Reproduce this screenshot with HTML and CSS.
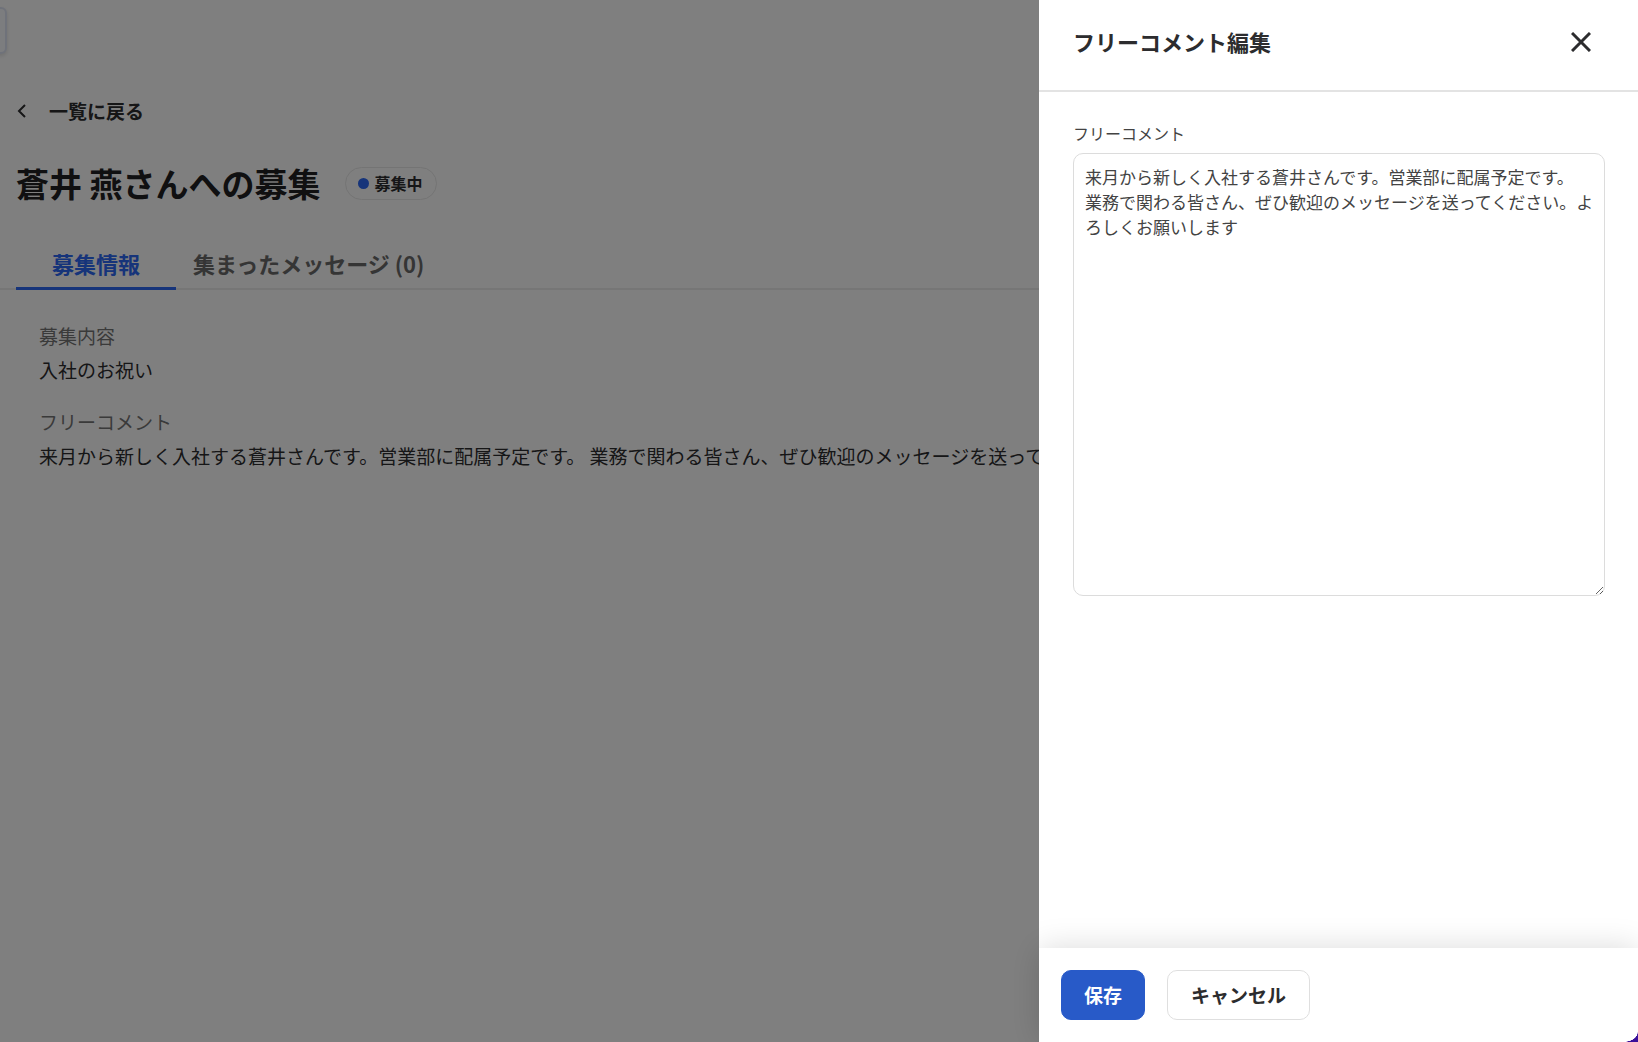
FILE: index.html
```html
<!DOCTYPE html>
<html lang="ja">
<head>
<meta charset="utf-8">
<meta name="viewport" content="width=device-width, initial-scale=1">
<title>蒼井 燕さんへの募集</title>
<link rel="stylesheet" href="styles.css">
</head>
<body>
<div class="side-card"></div>
<main class="page">
  <a class="back" href="#">
    <svg class="back-icon" viewBox="0 0 12 16" aria-hidden="true"><path d="M9 2 3 8l6 6"/></svg>
    <span>一覧に戻る</span>
  </a>
  <div class="heading">
    <h1 class="title">蒼井 燕さんへの募集</h1>
    <span class="badge"><span class="dot"></span>募集中</span>
  </div>
  <nav class="tabs">
    <a class="tab tab-active" href="#">募集情報</a>
    <a class="tab" href="#">集まったメッセージ (0)</a>
  </nav>
  <dl class="details">
    <div class="detail">
      <dt>募集内容</dt>
      <dd>入社のお祝い</dd>
    </div>
    <div class="detail">
      <dt>フリーコメント</dt>
      <dd>来月から新しく入社する蒼井さんです。営業部に配属予定です。 業務で関わる皆さん、ぜひ歓迎のメッセージを送ってください。よろしくお願いします</dd>
    </div>
  </dl>
</main>
<div class="overlay"></div>
<aside class="drawer" role="dialog" aria-labelledby="drawer-title">
  <header class="drawer-header">
    <h2 class="drawer-title" id="drawer-title">フリーコメント編集</h2>
    <button class="close" type="button" aria-label="閉じる">
      <svg class="close-icon" viewBox="0 0 20 20" aria-hidden="true"><path d="M1 1 19 19M19 1 1 19"/></svg>
    </button>
  </header>
  <div class="drawer-body">
    <label class="label" for="comment">フリーコメント</label>
    <textarea class="comment" id="comment">来月から新しく入社する蒼井さんです。営業部に配属予定です。
業務で関わる皆さん、ぜひ歓迎のメッセージを送ってください。よろしくお願いします</textarea>
  </div>
  <footer class="drawer-footer">
    <button class="button button-primary" type="button">保存</button>
    <button class="button" type="button">キャンセル</button>
  </footer>
</aside>
<div class="corner"></div>
</body>
</html>
```
FILE: styles.css
```css
* {
  box-sizing: border-box;
}

body {
  margin: 0;
  min-height: 100vh;
  background: #fff;
  color: #2c2c2e;
  font-family: "Noto Sans CJK JP", sans-serif;
  font-size: 19px;
  line-height: 28px;
  overflow: hidden;
}

h1, h2, dl, dd {
  margin: 0;
}

a {
  color: inherit;
  text-decoration: none;
}

/* Edge of the navigation card that sits outside the window */
.side-card {
  position: absolute;
  top: 7px;
  left: -50px;
  width: 57px;
  height: 47px;
  border: 2px solid #dfe5f4;
  border-radius: 6px;
  background: #f8faff;
  box-shadow: 0 2px 4px rgba(0, 0, 0, 0.12);
}

.page {
  padding-top: 97px;
}

.back {
  display: inline-flex;
  align-items: center;
  gap: 21px;
  margin-left: 16px;
  font-weight: 700;
}

.back-icon {
  width: 12px;
  height: 16px;
  fill: none;
  stroke: currentColor;
  stroke-width: 2;
}

.heading {
  display: flex;
  align-items: center;
  gap: 24px;
  margin: 34px 16px 0;
}

.title {
  color: #202022;
  font-size: 33px;
  line-height: 48px;
}

.badge {
  display: flex;
  align-items: center;
  gap: 6px;
  height: 33px;
  padding: 0 13px 0 12px;
  border: 1px solid #e8e8e8;
  border-radius: 17px;
  font-size: 16px;
  font-weight: 700;
}

.dot {
  width: 11px;
  height: 11px;
  border-radius: 50%;
  background: #2c68f4;
}

.tabs {
  display: flex;
  margin-top: 38px;
  padding-left: 16px;
  border-bottom: 2px solid #ececec;
}

.tab {
  margin-bottom: -2px;
  padding: 2px 17px 8px;
  border-bottom: 3px solid transparent;
  color: #6b6b6b;
  font-size: 22px;
  font-weight: 700;
  line-height: 32px;
}

.tab-active {
  padding-right: 36px;
  padding-left: 36px;
  border-color: #2c68f4;
  color: #2c68f4;
}

.details {
  display: grid;
  gap: 24px;
  padding: 32px 39px;
}

.detail {
  display: grid;
  gap: 6px;
}

.detail dt {
  color: #757575;
}

.overlay {
  position: fixed;
  inset: 0;
  background: rgba(0, 0, 0, 0.5);
}

.drawer {
  position: fixed;
  top: 0;
  right: 0;
  bottom: 0;
  display: flex;
  flex-direction: column;
  width: 599px;
  max-width: 100%;
  background: #fff;
}

.drawer-header {
  display: flex;
  align-items: center;
  justify-content: space-between;
  padding: 23px 47px 31px 34px;
  border-bottom: 2px solid #e3e3e3;
}

.drawer-title {
  font-size: 22px;
  line-height: 36px;
}

.close {
  display: flex;
  padding: 2px 0 0;
  border: 0;
  background: none;
  color: #2c2c2e;
}

.close-icon {
  width: 20px;
  height: 20px;
  fill: none;
  stroke: currentColor;
  stroke-width: 3;
}

.drawer-body {
  display: flex;
  flex: 1;
  flex-direction: column;
  gap: 8px;
  padding: 29px 33px 30px 34px;
}

.label {
  color: #434343;
  font-size: 16px;
  line-height: 24px;
}

.comment {
  width: 100%;
  height: 443px;
  padding: 10px 8px 10px 11px;
  border: 1px solid #dcdcdc;
  border-radius: 10px;
  background: #fff;
  color: #434343;
  font-family: inherit;
  font-size: 17px;
  line-height: 25px;
  outline: 0;
  resize: both;
}

.drawer-footer {
  display: flex;
  gap: 22px;
  padding: 22px;
  background: #fff;
  box-shadow: 0 0 32px rgba(0, 0, 0, 0.15);
}

.button {
  height: 50px;
  padding: 0 23px 2px;
  border: 1px solid #dfdfdf;
  border-radius: 10px;
  background: #fff;
  color: #2c2c2e;
  font-family: inherit;
  font-size: 19px;
  font-weight: 700;
}

.button-primary {
  padding: 0 22px 2px;
  border-color: #285ac8;
  background: #285ac8;
  color: #fff;
}

/* Rounded lower corner of the window */
.corner {
  position: fixed;
  right: 0;
  bottom: 0;
  width: 14px;
  height: 10px;
  background: radial-gradient(ellipse 14px 10px at 0 0, transparent 96%, #3a109a 100%);
}
```
